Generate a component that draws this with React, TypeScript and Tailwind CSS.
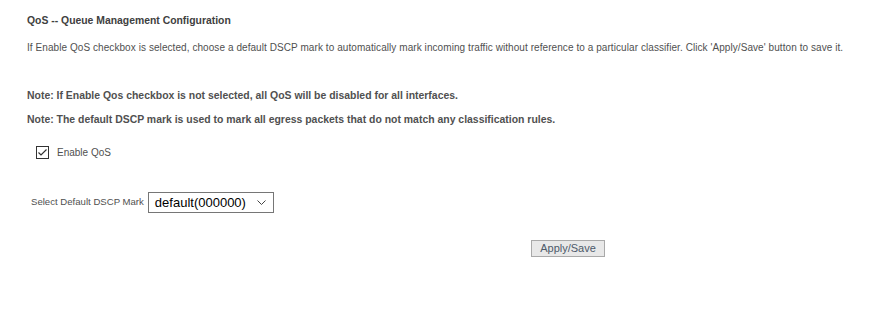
export default function App() {
  return (
    <div className="w-[882px] h-[320px] bg-white text-[10px] text-[#505050] font-['Liberation_Sans',Arial,sans-serif]">
      <div className="pl-[27px] pt-[14px]">
        {/* Header */}
        <div className="font-bold text-[10.4px] text-[#404040] leading-[14px]">QoS -- Queue Management Configuration</div>
        <p className="mt-[13px] leading-[14px] tracking-[0.07px]">
          If Enable QoS checkbox is selected, choose a default DSCP mark to automatically mark incoming traffic without reference to a particular classifier. Click 'Apply/Save' button to save it.
        </p>

        {/* Notes */}
        <p className="mt-[34px] font-bold text-[10.45px] leading-[14px]">
          Note: If Enable Qos checkbox is not selected, all QoS will be disabled for all interfaces.
        </p>
        <p className="mt-[10px] font-bold text-[10.45px] leading-[14px]">
          Note: The default DSCP mark is used to mark all egress packets that do not match any classification rules.
        </p>

        {/* Enable checkbox */}
        <div className="mt-[18px] ml-[9px] flex items-center gap-[8px]">
          <span className="w-[13px] h-[13px] border border-[#333] flex items-center justify-center">
            <svg width="11" height="11" viewBox="0 0 11 11">
              <path d="M1.5 5.5 L4 8 L9.5 2.5" fill="none" stroke="#333" strokeWidth="1.2" />
            </svg>
          </span>
          <span>Enable QoS</span>
        </div>

        {/* DSCP select */}
        <div className="mt-[32px] ml-[4px] flex items-center gap-[4px]">
          <span className="text-[9.6px]">Select Default DSCP Mark</span>
          <div className="w-[126px] h-[21px] border border-[#767676] flex items-center justify-between pl-[6px] pr-[7px] text-[13px] text-black leading-none">
            <span>default(000000)</span>
            <svg width="9" height="5" viewBox="0 0 9 5">
              <path d="M0.5 0.5 L4.5 4.5 L8.5 0.5" fill="none" stroke="#444" strokeWidth="1" />
            </svg>
          </div>
        </div>

        {/* Apply button */}
        <div className="mt-[27px] flex">
          <button className="ml-[504px] w-[74px] h-[17px] bg-[#e8e8e8] border border-[#a9a9a9] text-[11px] text-[#4d5a6a] leading-none">
            Apply/Save
          </button>
        </div>
      </div>
    </div>
  );
}
